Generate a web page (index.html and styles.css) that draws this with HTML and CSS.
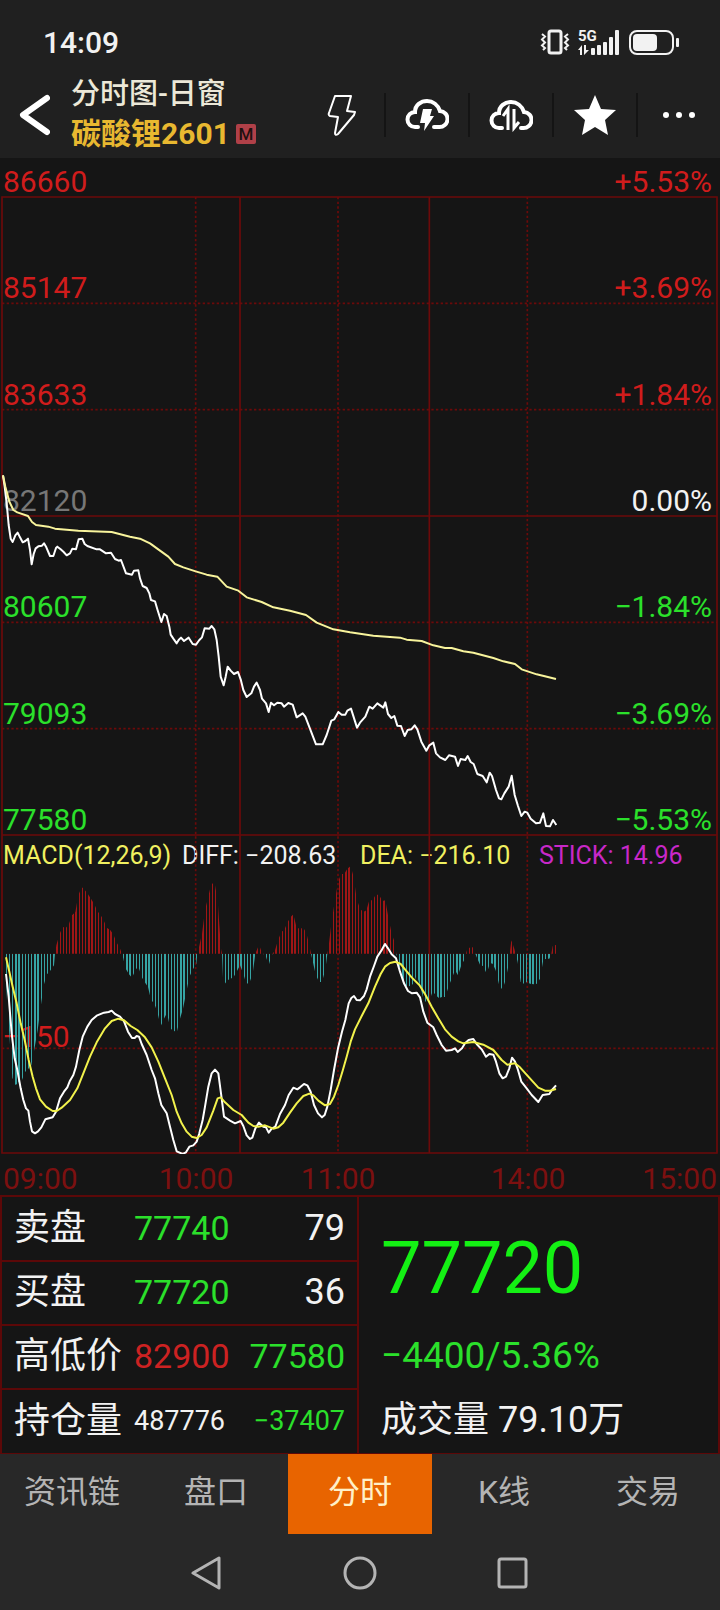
FILE: index.html
```html
<!DOCTYPE html>
<html lang="zh-CN">
<head>
  <meta charset="UTF-8" />
  <meta name="viewport" content="width=device-width, initial-scale=1" />
  <title>分时图-日窗</title>
  <link rel="stylesheet" href="styles.css">
</head>
<body>

  <div class="status">
    <span class="clock">14:09</span>
    <div class="status-icons">
      <svg width="30" height="28" viewBox="0 0 30 28" fill="none" stroke="#f2f2f2">
        <rect x="9" y="3" width="12" height="22" rx="2" stroke-width="3"/>
        <path d="M2 6l3 2.500-3 3 3 3-3 3 3 2.500-2 2M28 6l-3 2.500 3 3-3 3 3 3-3 2.500 2 2" stroke-width="2"/>
      </svg>
      <div class="network">
        <span>5G</span>
        <svg width="42" height="28" viewBox="0 0 42 28" fill="#f2f2f2">
          <path d="M0 22l4-5v10H2v-5zM6 17h2v5h3l-5 5z"/>
          <rect x="13" y="20" width="4" height="7" rx="1"/>
          <rect x="19" y="17" width="4" height="10" rx="1"/>
          <rect x="25" y="14" width="4" height="13" rx="1"/>
          <rect x="31" y="9" width="4" height="18" rx="1"/>
          <rect x="37" y="2" width="4" height="25" rx="1"/>
        </svg>
      </div>
      <svg width="52" height="28" viewBox="0 0 52 28">
        <rect x="2" y="3" width="43" height="23" rx="7" fill="none" stroke="#f2f2f2" stroke-width="2"/>
        <rect x="5" y="6" width="24" height="17" rx="4" fill="#f2f2f2"/>
        <rect x="48" y="10" width="3" height="9" rx="1" fill="#f2f2f2"/>
      </svg>
    </div>
  </div>

  <header class="header">
    <button class="back" aria-label="返回">
      <svg width="32" height="42" viewBox="0 0 32 42" fill="none" stroke="#fff" stroke-width="6" stroke-linecap="round" stroke-linejoin="round">
        <path d="M29 4L5 21l24 17"/>
      </svg>
    </button>
    <div class="titles">
      <h1>分时图-日窗</h1>
      <h2>碳酸锂2601<span class="tag">M</span></h2>
    </div>
    <div class="tools">
      <button aria-label="闪电">
        <svg width="30" height="44" viewBox="0 0 30 44" fill="none" stroke="#fff" stroke-width="2" stroke-linejoin="round">
          <path d="M8 3h16l-4 15 8 1-1 3L11 41q-3 2-3-1l3-16-8-1q-2-1-1-3z"/>
        </svg>
      </button>
      <button aria-label="云下单">
        <svg width="44" height="34" viewBox="0 0 44 34" fill="none" stroke="#fff" stroke-width="4" stroke-linecap="round">
          <path d="M13 29H10A7 7 0 0 1 10 14C10 7 16 3 22 3s11 4 13 10a8 8 0 0 1-1 16H29"/>
          <path d="M18 11h9l-2 7h4L19 33l1-8h-5z" fill="#fff" stroke="none"/>
        </svg>
      </button>
      <button aria-label="云条件单">
        <svg width="44" height="34" viewBox="0 0 44 34" fill="none" stroke="#fff" stroke-width="4" stroke-linecap="round">
          <path d="M13 30H10A7 7 0 0 1 10 15C10 8 16 4 22 4s11 4 13 10a8 8 0 0 1-1 16H32"/>
          <path d="M14 18l5-7v21M25 11v19l5-6" stroke-width="3" stroke-linecap="butt"/>
        </svg>
      </button>
      <button aria-label="自选">
        <svg width="42" height="42" viewBox="0 0 42 42" fill="#fff">
          <path d="M21 1l6 14 15 1-11 10 3 15-13-8-13 8 3-15L0 16l15-1z"/>
        </svg>
      </button>
      <button aria-label="更多">
        <svg width="34" height="8" viewBox="0 0 34 8" fill="#fff">
          <circle cx="4" cy="4" r="3"/><circle cx="17" cy="4" r="3"/><circle cx="30" cy="4" r="3"/>
        </svg>
      </button>
    </div>
  </header>

  <main>
    <section class="chart">
      <div class="price">
        <div class="level up"><span>86660</span><span>+5.53%</span></div>
        <div class="level up"><span>85147</span><span>+3.69%</span></div>
        <div class="level up"><span>83633</span><span>+1.84%</span></div>
        <div class="level flat"><span>82120</span><span>0.00%</span></div>
        <div class="level down"><span>80607</span><span>−1.84%</span></div>
        <div class="level down"><span>79093</span><span>−3.69%</span></div>
        <div class="level down"><span>77580</span><span>−5.53%</span></div>
      </div>
      <div class="macd">
        <div class="legend">
          <span class="yellow">MACD(12,26,9)</span>
          <span>DIFF: −208.63</span>
          <span class="yellow">DEA: −216.10</span>
          <span class="purple">STICK: 14.96</span>
        </div>
        <span class="macd-level">−150</span>
      </div>

      <svg class="plot" viewBox="0 0 2160 2988" preserveAspectRatio="none" fill="none">
        <defs>
          <clipPath id="sticks">
            <path d="M14 341L22 500L37 713L47 736L56 726L66 720L75 696L85 686L94 676L103 628L113 571L122 501L132 433L141 403L150 393L162 376L165 341L169 316L179 281L188 261L198 263L207 251L216 226L226 216L235 166L245 141L254 149L264 163L273 176L283 193L292 213L302 226L311 241L320 263L330 269L340 283L349 306L359 323L368 347L377 386L387 403L396 413L406 391L415 379L425 411L434 426L444 441L453 479L463 491L472 516L482 559L492 536L501 519L511 566L520 571L530 578L540 536L549 506L558 461L568 411L577 391L589 371L592 341L597 321L606 281L615 211L625 169L634 131L644 130L653 181L663 326L666 341L670 438L682 421L692 416L701 411L711 393L720 376L730 401L739 433L749 426L758 401L766 341L777 314L787 341L796 344L806 376L815 346L825 331L834 301L844 276L853 269L863 246L872 231L880 223L890 263L900 266L910 263L919 279L928 316L933 341L947 403L957 426L966 426L976 389L982 341L985 326L995 244L1004 186L1014 126L1023 103L1033 101L1042 86L1052 78L1061 111L1070 176L1080 206L1090 216L1099 211L1108 181L1118 181L1127 164L1137 164L1147 183L1156 181L1166 236L1175 281L1184 306L1189 341L1203 401L1212 436L1222 439L1231 438L1240 431L1250 406L1260 436L1270 476L1280 489L1289 481L1298 453L1307 466L1317 474L1326 471L1336 471L1346 439L1355 416L1365 391L1374 406L1384 376L1393 359L1398 341L1403 323L1412 323L1422 321L1426 341L1431 353L1440 374L1450 379L1460 401L1470 369L1478 371L1487 391L1497 433L1507 449L1516 423L1525 379L1529 341L1534 301L1543 326L1547 341L1553 366L1562 426L1572 431L1581 426L1590 431L1601 433L1611 431L1620 416L1630 359L1639 356L1648 356L1654 341L1658 319L1672 313V341z"/>
          </clipPath>
        </defs>

        <g class="grid">
          <path d="M6 117H2151V2985H6zM6 1074H2151M6 2031H2151M720 117V2985M1288 117V2985"/>
          <path class="dotted" d="M6 436H2151M6 755H2151M6 1393H2151M6 1712H2151M6 2671H2151M587 117V2985M1014 117V2985M1582 117V2985"/>
        </g>

        <g transform="translate(0 906)" stroke-width="6" stroke-linejoin="round">
          <polyline class="line-price" points="9,46 14,80 20,130 26,195 32,236 38,246 46,226 53,218 60,232 68,247 76,243 84,236 90,270 95,313 101,282 107,265 115,259 126,257 132,250 139,262 150,288 160,288 168,264 172,260 182,268 191,276 200,286 210,280 217,266 228,268 236,238 247,236 254,252 262,258 290,268 300,268 318,280 333,278 345,297 356,302 363,300 378,340 396,344 402,332 415,331 420,355 428,378 440,384 448,400 453,420 465,424 472,448 484,486 492,462 500,468 508,500 512,524 520,536 530,550 536,540 543,533 552,543 566,533 578,552 588,554 598,540 606,532 614,505 628,506 635,498 643,508 650,540 656,590 662,650 671,676 677,650 683,620 692,632 702,642 714,636 722,658 730,690 740,711 754,700 762,680 770,668 780,690 786,716 798,730 806,756 813,728 822,736 832,728 845,730 852,740 865,729 878,734 890,772 908,760 916,770 948,853 968,853 980,825 994,782 1003,778 1015,756 1025,764 1036,764 1042,752 1053,746 1071,803 1080,788 1096,770 1108,740 1118,746 1132,730 1150,743 1156,727 1164,762 1174,774 1183,768 1192,797 1203,798 1214,828 1223,810 1234,808 1244,796 1252,808 1264,845 1279,872 1288,856 1300,848 1308,880 1320,892 1336,900 1347,886 1365,890 1374,918 1382,897 1396,900 1403,888 1412,906 1421,912 1432,942 1448,948 1460,967 1469,938 1476,948 1488,990 1497,1015 1504,1018 1513,1000 1526,980 1535,947 1544,1005 1554,1038 1564,1068 1574,1055 1582,1058 1592,1076 1608,1090 1620,1088 1630,1060 1638,1098 1650,1099 1659,1080 1669,1095"/>
          <polyline class="line-avg" points="9,46 16,80 28,125 40,150 52,157 84,168 96,186 108,195 145,200 165,206 235,212 335,216 390,230 420,236 450,250 480,272 505,290 525,312 550,322 587,334 620,344 652,350 680,380 715,392 740,412 785,426 820,442 870,452 918,465 950,488 1000,508 1050,517 1120,527 1200,533 1220,539 1265,543 1300,556 1335,564 1355,564 1390,574 1420,578 1480,594 1510,604 1545,612 1565,628 1610,643 1668,657"/>
        </g>

        <g transform="translate(0 2046)" stroke-width="6" stroke-linejoin="round">
          <g clip-path="url(#sticks)">
            <path class="stick-up" d="M17 171H1674"/>
            <path class="stick-down" d="M17 541H1674"/>
          </g>
          <polyline class="line-price" points="18,402 26,470 35,580 44,655 52,690 62,745 70,780 78,805 85,812 90,845 96,874 105,880 114,874 124,862 136,838 158,832 168,815 180,775 192,755 202,742 210,722 220,705 228,680 238,630 248,590 262,560 275,540 290,527 312,518 326,516 335,512 345,522 360,530 372,544 384,575 396,594 404,594 410,588 417,590 425,612 440,645 455,690 465,715 475,760 484,795 500,820 510,860 520,900 530,934 548,942 558,937 568,920 580,916 590,905 598,880 608,840 615,800 625,740 635,700 645,689 655,700 663,760 672,830 690,842 705,850 722,843 730,858 740,886 750,897 757,893 766,865 777,848 790,860 798,862 806,878 815,866 826,860 840,822 855,795 866,765 880,743 892,748 900,742 912,732 922,736 932,755 942,795 954,820 966,832 974,825 982,800 992,750 1002,690 1014,625 1026,575 1036,540 1046,490 1054,474 1062,468 1070,480 1080,481 1092,468 1100,448 1110,410 1122,378 1132,350 1144,332 1155,312 1164,325 1175,343 1188,355 1200,395 1212,430 1224,453 1236,460 1250,458 1260,472 1270,515 1282,548 1300,562 1310,585 1325,615 1338,632 1355,630 1365,625 1373,636 1386,625 1395,610 1406,600 1420,597 1430,612 1445,628 1458,650 1468,642 1480,644 1488,665 1498,700 1508,715 1518,710 1528,685 1536,653 1545,665 1554,690 1564,725 1580,745 1595,765 1615,786 1628,765 1648,762 1656,750 1668,736"/>
          <polyline class="line-dea" points="18,352 28,395 38,440 50,490 62,550 74,600 86,660 98,710 108,745 120,778 138,800 158,813 170,813 185,803 210,780 232,745 250,700 270,650 290,607 315,565 335,543 355,536 372,541 392,558 412,570 435,592 455,622 475,665 495,715 515,765 530,815 545,850 560,875 575,890 590,894 605,885 620,862 640,812 653,775 662,772 675,787 700,810 725,825 745,848 760,858 775,860 795,856 820,866 835,862 850,848 870,818 890,790 910,768 928,761 940,766 955,782 975,796 990,792 1002,770 1015,735 1028,692 1040,650 1052,605 1065,568 1085,528 1105,490 1125,440 1142,402 1155,380 1170,369 1186,365 1202,372 1215,388 1235,412 1258,435 1275,462 1295,500 1315,535 1335,568 1355,590 1375,604 1390,610 1420,606 1450,614 1480,630 1505,660 1522,674 1545,670 1560,682 1585,710 1615,743 1635,752 1650,752 1668,747"/>
        </g>
      </svg>
    </section>

    <div class="times">
      <span>09:00</span>
      <span>10:00</span>
      <span>11:00</span>
      <span class="t14">14:00</span>
      <span class="t15">15:00</span>
    </div>

    <section class="quote">
      <table>
        <tr><th>卖盘</th><td class="green">77740</td><td class="num">79</td></tr>
        <tr><th>买盘</th><td class="green">77720</td><td class="num">36</td></tr>
        <tr><th>高低价</th><td class="red">82900</td><td class="green">77580</td></tr>
        <tr class="small"><th>持仓量</th><td>487776</td><td class="green">−37407</td></tr>
      </table>
      <div class="summary">
        <div class="last">77720</div>
        <div class="change">−4400/5.36%</div>
        <div class="volume">成交量 79.10万</div>
      </div>
    </section>
  </main>

  <nav class="tabs">
    <button>资讯链</button>
    <button>盘口</button>
    <button class="active">分时</button>
    <button>K线</button>
    <button>交易</button>
  </nav>

  <div class="system-nav">
    <button aria-label="后退">
      <svg width="34" height="34" viewBox="0 0 34 34"><path d="M29 2v30L3 17z"/></svg>
    </button>
    <button aria-label="主页">
      <svg width="34" height="34" viewBox="0 0 34 34"><circle cx="17" cy="17" r="15"/></svg>
    </button>
    <button aria-label="最近任务">
      <svg width="34" height="34" viewBox="0 0 34 34"><rect x="3" y="3" width="27" height="28" rx="2"/></svg>
    </button>
  </div>

</body>
</html>
```

FILE: styles.css
```css
* {
  box-sizing: border-box;
}
body {
  margin: 0;
  background: #151515;
  color: #f2f2f2;
  font-family: Roboto, "Noto Sans CJK SC", sans-serif;
}
button {
  background: none;
  border: none;
  padding: 0;
  color: inherit;
  font-family: inherit;
  cursor: pointer;
}
svg {
  display: block;
}

/* status bar */
.status {
  display: flex;
  justify-content: space-between;
  align-items: center;
  height: 76px;
  padding: 8px 40px 0 43px;
  background: #202020;
}
.clock {
  font-size: 30px;
  font-weight: 500;
}
.status-icons {
  display: flex;
  gap: 8px;
}
.network {
  position: relative;
}
.network span {
  position: absolute;
  top: 1px;
  left: 0;
  font-size: 15px;
  line-height: 15px;
  font-weight: bold;
}

/* header */
.header {
  display: flex;
  align-items: center;
  height: 82px;
  padding-left: 18px;
  background: #202020;
}
.back {
  width: 53px;
  margin-bottom: 4px;
}
.titles {
  flex: 1;
  margin-bottom: 6px;
  white-space: nowrap;
}
.titles h1, .titles h2 {
  margin: 0;
  line-height: 39px;
}
.titles h1 {
  color: #ece8d8;
  font-size: 29px;
  font-weight: 500;
}
.titles h2 {
  display: flex;
  align-items: center;
  gap: 6px;
  color: #e8b830;
  font-size: 30px;
  font-weight: bold;
}
.tag {
  width: 20px;
  height: 20px;
  border-radius: 2px;
  background: #b04048;
  color: #201010;
  font-size: 17px;
  line-height: 20px;
  font-weight: 500;
  text-align: center;
}
.tools {
  display: grid;
  grid-template-columns: repeat(5, 84px);
  margin-bottom: 4px;
}
.tools button {
  display: flex;
  justify-content: center;
  align-items: center;
  height: 44px;
}
.tools button + button {
  border-left: 2px solid #141414;
}

/* chart */
.chart {
  position: relative;
}
.plot {
  position: absolute;
  top: 0;
  left: 0;
  width: 100%;
  height: 100%;
}
.price {
  display: flex;
  flex-direction: column;
  justify-content: space-between;
  height: 677px;
}
.level {
  display: flex;
  justify-content: space-between;
  padding: 9px 8px 0 3px;
  font-size: 30px;
  line-height: 30px;
}
.up {
  color: #d01c1c;
}
.down {
  color: #2be02b;
}
.flat span:first-child {
  color: #777;
}
.macd {
  position: relative;
  height: 319px;
}
.legend {
  display: grid;
  grid-template-columns: 179px 178px 179px auto;
  padding: 6px 0 0 3px;
  font-size: 25px;
  line-height: 30px;
  white-space: nowrap;
}
.yellow {
  color: #f0f060;
}
.purple {
  color: #c828c8;
}
.macd-level {
  position: absolute;
  left: 2px;
  bottom: 102px;
  color: #d01c1c;
  font-size: 30px;
  line-height: 30px;
}
.grid {
  stroke: #6c0a0a;
  stroke-width: 5;
}
.dotted {
  stroke-dasharray: 7 7;
}
.line-price {
  stroke: #fff;
}
.line-avg {
  stroke: #f8f49c;
}
.line-dea {
  stroke: #f2f24c;
}
.stick-up, .stick-down {
  stroke-dasharray: 4 5.52;
  shape-rendering: crispEdges;
}
.stick-up {
  stroke: #a01616;
  stroke-width: 340;
}
.stick-down {
  stroke: #36a4a4;
  stroke-width: 400;
}

.times {
  display: grid;
  grid-template-columns: 117fr 158fr 126fr 27fr 200fr 92fr;
  height: 41px;
  padding-top: 10px;
  color: #7c1010;
  font-size: 30px;
  line-height: 30px;
  text-align: center;
}
.times span:first-child {
  padding-left: 3px;
  text-align: left;
}
.t14 {
  grid-column: 5;
}
.t15 {
  padding-right: 3px;
  text-align: right;
}

/* quote panel */
.quote {
  display: grid;
  grid-template-columns: 359fr 361fr;
  border: 2px solid #5c0808;
  border-bottom-width: 1px;
}
.quote table {
  width: 100%;
  table-layout: fixed;
  border-collapse: collapse;
  border-right: 2px solid #5c0808;
}
.quote tr + tr {
  border-top: 2px solid #5c0808;
}
.quote th, .quote td {
  height: 64px;
  padding: 0 0 2px;
  white-space: nowrap;
}
.quote th {
  width: 132px;
  padding-left: 12px;
  font-size: 36px;
  line-height: 36px;
  font-weight: 400;
  text-align: left;
}
.quote td {
  font-size: 34px;
  line-height: 36px;
}
.quote td:last-child {
  padding-right: 12px;
  text-align: right;
}
.quote .num {
  font-size: 36px;
}
.quote .small td {
  font-size: 27px;
}
.green {
  color: #2be02b;
}
.red {
  color: #cc2222;
}
.summary {
  display: flex;
  flex-direction: column;
  padding: 32px 0 0 22px;
}
.last {
  color: #14f014;
  font-size: 72px;
  line-height: 80px;
}
.change {
  margin-top: 15px;
  color: #2be02b;
  font-size: 37px;
  line-height: 64px;
}
.volume {
  font-size: 36px;
  line-height: 64px;
}

/* bottom bars */
.tabs {
  display: grid;
  grid-template-columns: repeat(5, 1fr);
  background: #282828;
  color: #b4b4b4;
}
.tabs button {
  height: 80px;
  padding-bottom: 10px;
  font-size: 32px;
}
.tabs .active {
  background: #e86400;
  color: #fff0c8;
}
.system-nav {
  display: flex;
  justify-content: center;
  align-items: center;
  gap: 119px;
  height: 78px;
  background: #282828;
}
.system-nav svg {
  fill: none;
  stroke: #b4b4b4;
  stroke-width: 3;
  stroke-linejoin: round;
}
```
